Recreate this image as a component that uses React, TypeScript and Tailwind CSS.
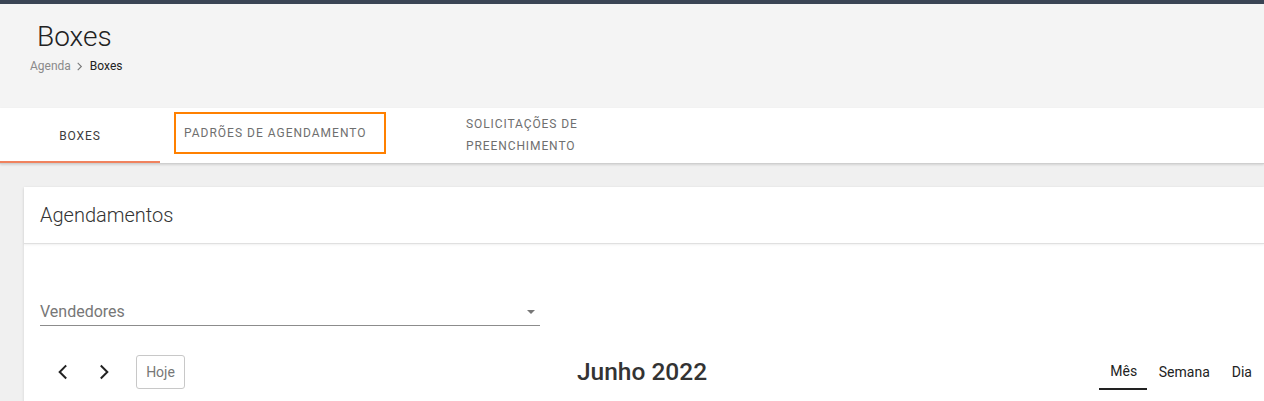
import React from 'react';

const ChevronRight: React.FC<{ className?: string }> = ({ className }) => (
  <svg viewBox="0 0 24 24" className={className} fill="none" stroke="currentColor" strokeWidth={2.4} strokeLinecap="square">
    <path d="M9 5l7 7-7 7" />
  </svg>
);

const ChevronLeft: React.FC<{ className?: string }> = ({ className }) => (
  <svg viewBox="0 0 24 24" className={className} fill="none" stroke="currentColor" strokeWidth={2.4} strokeLinecap="square">
    <path d="M15 5l-7 7 7 7" />
  </svg>
);

const App: React.FC = () => {
  return (
    <div className="w-[1264px] h-[401px] overflow-hidden bg-[#f0f0f0] font-['Roboto',sans-serif]">
      <div className="h-[4px] bg-[#3a4454]" />

      {/* page header */}
      <div className="h-[104px] bg-[#f4f4f4] pl-[30px] pt-[16px]">
        <h1 className="pl-[7px] text-[28px] leading-[34px] font-light text-[#212121]">Boxes</h1>
        <div className="mt-[4px] flex items-center text-[12px] leading-[16px]">
          <span className="text-[#8a8a8a]">Agenda</span>
          <ChevronRight className="w-[11px] h-[11px] ml-[3px] mr-[5px] text-[#777]" />
          <span className="text-[#222]">Boxes</span>
        </div>
      </div>

      {/* tabs */}
      <div className="h-[56px] bg-white flex items-stretch border-b border-[#cfcfcf] shadow-[0_1px_2px_rgba(0,0,0,0.12)]">
        <div className="w-[160px] flex items-center justify-center border-b-2 border-[#f0825e] pt-[2px] text-[12px] tracking-[0.9px] text-[#3c3c3c]">
          BOXES
        </div>
        <div className="ml-[14px] mt-[4px] w-[212px] h-[42px] border-2 border-[#ff8000] flex items-center pl-[8px] text-[12px] tracking-[1px] text-[#6f6f6f]">
          PADRÕES DE AGENDAMENTO
        </div>
        <div className="ml-[80px] pt-[5px] text-[12px] leading-[22px] tracking-[0.9px] text-[#6f6f6f]">
          SOLICITAÇÕES DE
          <br />
          PREENCHIMENTO
        </div>
      </div>

      {/* card */}
      <div className="ml-[24px] mt-[23px] pb-[40px] bg-white shadow-[0_1px_3px_rgba(0,0,0,0.12)]">
        <div className="h-[57px] flex items-center pl-[16px] border-b border-[#e0e0e0] shadow-[0_1px_2px_rgba(0,0,0,0.06)]">
          <h2 className="text-[20px] font-light text-[#333]">Agendamentos</h2>
        </div>
        <div className="pt-[55px] px-[16px]">
          <div className="w-[500px] h-[27px] border-b border-[#8c8c8c] flex items-center justify-between">
            <span className="text-[16px] text-[#777]">Vendedores</span>
            <span className="mr-[5px] w-0 h-0 border-l-[4px] border-r-[4px] border-t-[4px] border-l-transparent border-r-transparent border-t-[#777]" />
          </div>
          <div className="mt-[28px] grid grid-cols-[1fr_auto_1fr] items-center h-[36px]">
            <div className="flex items-center">
              <button className="ml-[13px] w-[20px] text-[#222]">
                <ChevronLeft className="w-[20px] h-[20px]" />
              </button>
              <button className="ml-[21px] w-[20px] text-[#222]">
                <ChevronRight className="w-[20px] h-[20px]" />
              </button>
              <button className="ml-[22px] w-[49px] h-[34px] border border-[#c8c8c8] rounded-[3px] text-[14px] text-[#777]">
                Hoje
              </button>
            </div>
            <div className="text-[24.5px] font-medium text-[#333] mr-[4px]">Junho 2022</div>
            <div className="flex justify-end items-center text-[14px] text-[#222] mr-[-4px]">
              <span className="w-[48px] h-[36px] flex items-center justify-center border-b-2 border-[#222] pl-[2px]">Mês</span>
              <span className="ml-[12px]">Semana</span>
              <span className="ml-[22px]">Dia</span>
            </div>
          </div>
        </div>
      </div>
    </div>
  );
};

export default App;
